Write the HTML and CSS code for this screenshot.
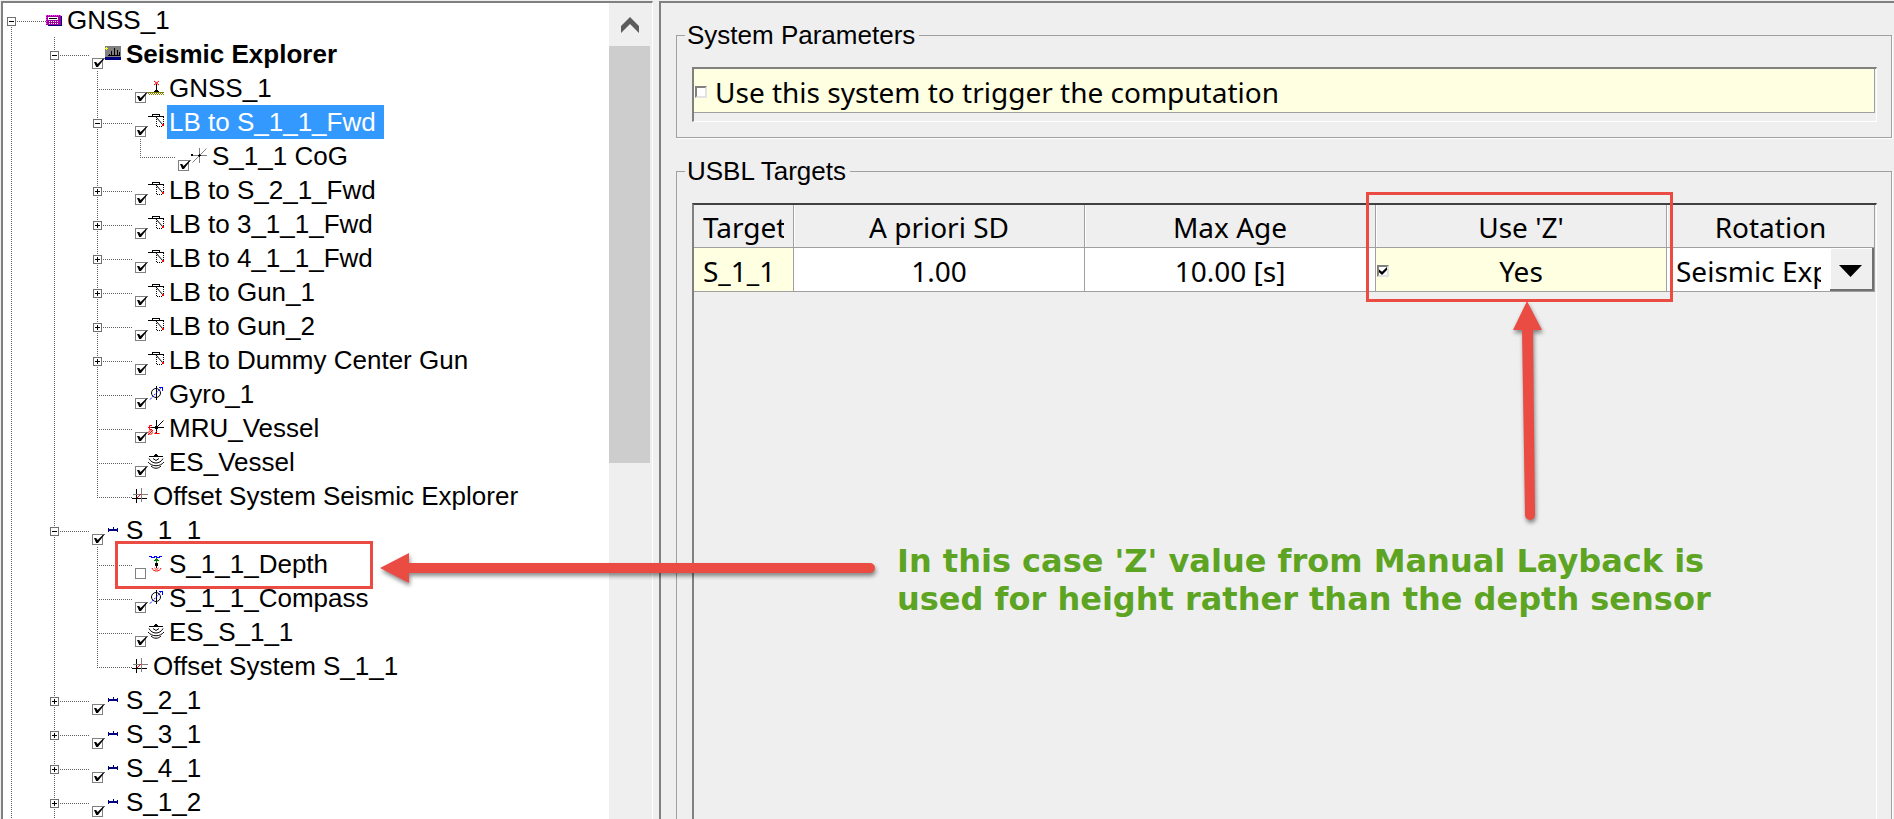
FILE: index.html
```html
<!DOCTYPE html>
<html lang="en">
<head>
<meta charset="utf-8">
<title>System configuration</title>
<link rel="stylesheet" href="styles.css">
</head>
<body>
<svg class="sprites" aria-hidden="true">
  <symbol id="i-root" viewBox="0 0 16 16"><path fill="#000080" d="M1 4h15v10H2z"/><path fill="#a000a0" d="M0 3h15v10H0z"/><path fill="none" stroke="#ff40ff" stroke-dasharray="1 1" d="M0 3.500h15M.5 3v10"/><path fill="#fff" d="M2 5h10v3H2z"/><path fill="#000" d="M3 6h8v1H3z"/><path stroke="#fff" stroke-dasharray="1 1" d="M3 9.500h10M3 11.500h10"/></symbol>
  <symbol id="i-ship" viewBox="0 0 16 16"><path fill="#808080" d="M0 0h16v14H0z"/><path fill="#ff0" d="M1 1h1v3H1zM0 2h3v1H0z"/><path fill="#000" d="M9 2h1v8H9zM6 5h1v5H6zM12 4h1v6h-1zM14 6h1v4h-1zM4 8h1v2H4zM3 9h12v1H3z"/><path fill="#000080" d="M0 11h16v3H0z"/></symbol>
  <symbol id="i-gnss" viewBox="0 0 16 16"><path class="fine" stroke="#f00" fill="none" d="M6 1l5 4M11 1L6 5"/><path fill="#000" d="M8 4h1v8H8zM7 10h3v1H7zM6 11h5v1H6z"/><path fill="#808000" d="M0 12h16v1H0z"/><path stroke="#808000" stroke-dasharray="1 1" d="M0 13.500h16M1 14.500h15"/></symbol>
  <symbol id="i-lb" viewBox="0 0 16 16"><path fill="#000" d="M4 0h8v1H4zM4 1h1v1H4zM11 1h1v1h-1zM0 2h16v1H0z"/><path class="fine" stroke="#000" fill="none" d="M8 3l7 8"/><path stroke="#000" stroke-dasharray="1 1" fill="none" d="M15.500 3v8M8.500 5v7M9 12.500h6"/><path fill="#f00" d="M14 10h2v2h-2z"/></symbol>
  <symbol id="i-cog" viewBox="0 0 16 16"><path stroke="#808080" fill="none" d="M8.500 0v15M0 7.500h16"/><path class="fine" stroke="#808080" fill="none" d="M15.500.5l-14 14"/><path fill="#000" d="M0 6h2v2H0zM7 7h3v1H7zM8 6h1v3H8z"/></symbol>
  <symbol id="i-gyro" viewBox="0 0 16 16"><circle class="fine" cx="8" cy="7" r="4.500" fill="none" stroke="#000"/><path fill="#000" d="M8 0h1v14H8z"/><path class="fine" stroke="#00f" stroke-dasharray="2 1" fill="none" d="M2 13.500L13 2"/><path fill="#00f" d="M11 1h4v4h-1V2h-3z"/></symbol>
  <symbol id="i-mru" viewBox="0 0 16 16"><path fill="#000" d="M8 0h1v14H8zM3 7h13v1H3zM7 6h3v3H7z"/><g class="fine" fill="none"><path stroke="#000" d="M15.500.5l-7 7"/><path stroke="#f00" d="M4 5.500H1.500v4H4M0 7.500h3"/><circle stroke="#f00" cx="2.500" cy="12.500" r="1.800"/><path stroke="#f00" d="M0 15l5-5M6.500 13.500h5M9 11l-2 2.500"/></g></symbol>
  <symbol id="i-echo" viewBox="0 0 16 16"><path fill="#000" d="M7 0h2v1H7zM6 1h4v1H6zM1 2h14v1H1z"/><path class="fine" stroke="#000" fill="none" d="M5 4.500l3 2 3-2M1 4.500c3 6 11 6 14 0M0 8c4 5 12 5 16 0M3 12c3 3 7 3 10 0"/></symbol>
  <symbol id="i-offset" viewBox="0 0 16 16"><path stroke="#000" fill="none" d="M4.500 1v14M0 10.500h15"/><path stroke="#808080" fill="none" d="M9.500 0v14M1 6.500h15"/><path class="fine" stroke="#f00" fill="none" d="M5 10l4-4"/></symbol>
  <symbol id="i-tow" viewBox="0 0 16 16"><path fill="#000080" d="M3 6h1v1h4V5h1v2h3V6h1v4h-1V9H4v1H3V9z"/></symbol>
  <symbol id="i-depth" viewBox="0 0 16 16"><path stroke="#00f" fill="none" d="M1 .5h3M6 .5h3M11 .5h3M3 1.500h4M8 1.500h4"/><path fill="#008000" d="M8 2h1v6H8zM7 3h3v1H7zM6 4h5v1H6z"/><path fill="#000" d="M7 7h3v3H7zM8 10h1v2H8z"/><path class="fine" stroke="#f00" fill="none" d="M4 12c1 4 8 4 9 0M6.500 12c1 1.500 3 1.500 4 0"/></symbol>
</svg>

<main class="app">
  <section class="tree-pane">
    <ul class="tree">
      <li class="row"><i class="g down"><button class="tg" aria-label="Collapse"></button></i><span class="node"><svg class="ic"><use href="#i-root"/></svg><span class="lb">GNSS_1</span></span></li>
      <li class="row"><i class="g v"></i><i class="g v"><button class="tg" aria-label="Collapse"></button></i><label class="node"><input type="checkbox" class="ck" checked><svg class="ic"><use href="#i-ship"/></svg><span class="lb strong">Seismic Explorer</span></label></li>
      <li class="row"><i class="g v"></i><i class="g v"></i><i class="g v h"></i><label class="node"><input type="checkbox" class="ck" checked><svg class="ic"><use href="#i-gnss"/></svg><span class="lb">GNSS_1</span></label></li>
      <li class="row"><i class="g v"></i><i class="g v"></i><i class="g v"><button class="tg" aria-label="Collapse"></button></i><label class="node"><input type="checkbox" class="ck" checked><svg class="ic"><use href="#i-lb"/></svg><span class="lb selected">LB to S_1_1_Fwd</span></label></li>
      <li class="row"><i class="g v"></i><i class="g v"></i><i class="g v"></i><i class="g end h"></i><label class="node"><input type="checkbox" class="ck" checked><svg class="ic"><use href="#i-cog"/></svg><span class="lb">S_1_1 CoG</span></label></li>
      <li class="row"><i class="g v"></i><i class="g v"></i><i class="g v"><button class="tg plus" aria-label="Expand"></button></i><label class="node"><input type="checkbox" class="ck" checked><svg class="ic"><use href="#i-lb"/></svg><span class="lb">LB to S_2_1_Fwd</span></label></li>
      <li class="row"><i class="g v"></i><i class="g v"></i><i class="g v"><button class="tg plus" aria-label="Expand"></button></i><label class="node"><input type="checkbox" class="ck" checked><svg class="ic"><use href="#i-lb"/></svg><span class="lb">LB to 3_1_1_Fwd</span></label></li>
      <li class="row"><i class="g v"></i><i class="g v"></i><i class="g v"><button class="tg plus" aria-label="Expand"></button></i><label class="node"><input type="checkbox" class="ck" checked><svg class="ic"><use href="#i-lb"/></svg><span class="lb">LB to 4_1_1_Fwd</span></label></li>
      <li class="row"><i class="g v"></i><i class="g v"></i><i class="g v"><button class="tg plus" aria-label="Expand"></button></i><label class="node"><input type="checkbox" class="ck" checked><svg class="ic"><use href="#i-lb"/></svg><span class="lb">LB to Gun_1</span></label></li>
      <li class="row"><i class="g v"></i><i class="g v"></i><i class="g v"><button class="tg plus" aria-label="Expand"></button></i><label class="node"><input type="checkbox" class="ck" checked><svg class="ic"><use href="#i-lb"/></svg><span class="lb">LB to Gun_2</span></label></li>
      <li class="row"><i class="g v"></i><i class="g v"></i><i class="g v"><button class="tg plus" aria-label="Expand"></button></i><label class="node"><input type="checkbox" class="ck" checked><svg class="ic"><use href="#i-lb"/></svg><span class="lb">LB to Dummy Center Gun</span></label></li>
      <li class="row"><i class="g v"></i><i class="g v"></i><i class="g v h"></i><label class="node"><input type="checkbox" class="ck" checked><svg class="ic"><use href="#i-gyro"/></svg><span class="lb">Gyro_1</span></label></li>
      <li class="row"><i class="g v"></i><i class="g v"></i><i class="g v h"></i><label class="node"><input type="checkbox" class="ck" checked><svg class="ic"><use href="#i-mru"/></svg><span class="lb">MRU_Vessel</span></label></li>
      <li class="row"><i class="g v"></i><i class="g v"></i><i class="g v h"></i><label class="node"><input type="checkbox" class="ck" checked><svg class="ic"><use href="#i-echo"/></svg><span class="lb">ES_Vessel</span></label></li>
      <li class="row"><i class="g v"></i><i class="g v"></i><i class="g end h"></i><span class="node"><svg class="ic"><use href="#i-offset"/></svg><span class="lb">Offset System Seismic Explorer</span></span></li>
      <li class="row"><i class="g v"></i><i class="g v"><button class="tg" aria-label="Collapse"></button></i><label class="node"><input type="checkbox" class="ck" checked><svg class="ic"><use href="#i-tow"/></svg><span class="lb">S_1_1</span></label></li>
      <li class="row"><i class="g v"></i><i class="g v"></i><i class="g v h"></i><label class="node"><input type="checkbox" class="ck"><svg class="ic"><use href="#i-depth"/></svg><span class="lb">S_1_1_Depth</span></label></li>
      <li class="row"><i class="g v"></i><i class="g v"></i><i class="g v h"></i><label class="node"><input type="checkbox" class="ck" checked><svg class="ic"><use href="#i-gyro"/></svg><span class="lb">S_1_1_Compass</span></label></li>
      <li class="row"><i class="g v"></i><i class="g v"></i><i class="g v h"></i><label class="node"><input type="checkbox" class="ck" checked><svg class="ic"><use href="#i-echo"/></svg><span class="lb">ES_S_1_1</span></label></li>
      <li class="row"><i class="g v"></i><i class="g v"></i><i class="g end h"></i><span class="node"><svg class="ic"><use href="#i-offset"/></svg><span class="lb">Offset System S_1_1</span></span></li>
      <li class="row"><i class="g v"></i><i class="g v"><button class="tg plus" aria-label="Expand"></button></i><label class="node"><input type="checkbox" class="ck" checked><svg class="ic"><use href="#i-tow"/></svg><span class="lb">S_2_1</span></label></li>
      <li class="row"><i class="g v"></i><i class="g v"><button class="tg plus" aria-label="Expand"></button></i><label class="node"><input type="checkbox" class="ck" checked><svg class="ic"><use href="#i-tow"/></svg><span class="lb">S_3_1</span></label></li>
      <li class="row"><i class="g v"></i><i class="g v"><button class="tg plus" aria-label="Expand"></button></i><label class="node"><input type="checkbox" class="ck" checked><svg class="ic"><use href="#i-tow"/></svg><span class="lb">S_4_1</span></label></li>
      <li class="row"><i class="g v"></i><i class="g v"><button class="tg plus" aria-label="Expand"></button></i><label class="node"><input type="checkbox" class="ck" checked><svg class="ic"><use href="#i-tow"/></svg><span class="lb">S_1_2</span></label></li>
    </ul>
    <div class="scroll">
      <button class="scroll-up" aria-label="Scroll up"><svg width="18" height="16" viewBox="0 0 18 16"><path fill="#5c5c5c" d="M0 9l9-9 9 9v7L9 7l-9 9z"/></svg></button>
      <div class="scroll-track"><div class="thumb"></div></div>
    </div>
  </section>

  <section class="detail">
    <fieldset class="group">
      <legend>System Parameters</legend>
      <div class="sunken params">
        <label class="param"><input type="checkbox" class="box">Use this system to trigger the computation</label>
      </div>
    </fieldset>
    <fieldset class="group fill">
      <legend>USBL Targets</legend>
      <div class="sunken grid">
        <table>
          <colgroup><col class="c-target"><col><col><col><col class="c-rotation"></colgroup>
          <thead><tr><th class="left">Target</th><th>A priori SD</th><th>Max Age</th><th>Use 'Z'</th><th>Rotation</th></tr></thead>
          <tbody><tr>
            <td class="left key">S_1_1</td><td>1.00</td><td>10.00 [s]</td>
            <td class="key"><label class="usez"><input type="checkbox" class="box" checked><span>Yes</span></label></td>
            <td class="choice"><select aria-label="Rotation"><option>Seismic Explorer</option></select></td>
          </tr></tbody>
        </table>
      </div>
    </fieldset>
  </section>

  <svg class="marks" aria-hidden="true">
    <g fill="none" stroke="#ea4c44" stroke-width="3">
      <path d="M116.500 542.500h255v45h-255z"/>
      <path d="M1367.500 193.500h304v107h-304z"/>
    </g>
    <g class="arrows" fill="#ea4c44">
      <path d="M380 568l29-15v10h461a5 5 0 0 1 0 10H409v10z"/>
      <path d="M1527 301l15 29h-9l2 185a5 5 0 0 1-10 0l-3-185h-9z"/>
    </g>
  </svg>
  <p class="callout">In this case 'Z' value from Manual Layback is<br>used for height rather than the depth sensor</p>
</main>
</body>
</html>
```
FILE: styles.css
```css
* { box-sizing: border-box; }

body {
  margin: 0;
  background: #efefef;
  color: #000;
  font: 26px/34px "Liberation Sans", Arial, sans-serif;
}

.sprites { display: none; }
.fine { shape-rendering: auto; }

.app {
  position: relative;
  display: grid;
  grid-template-columns: 659fr 1235fr;
  min-height: 100vh;
}

/* Tree */
.tree-pane {
  display: flex;
  margin: 1px 6px 0 1px;
  border: 2px solid #808080;
  border-right: 1px solid #fff;
  border-bottom: 0;
  background: #efefef;
}

.tree {
  flex: 1;
  min-width: 0;
  margin: 0;
  padding: 0;
  list-style: none;
  background: #fff;
  overflow: hidden;
}

.row { display: flex; height: 34px; white-space: nowrap; }

.g {
  position: relative;
  flex: none;
  width: 43px;
  height: 34px;
}

.v::before, .end::before, .down::before {
  content: "";
  position: absolute;
  left: 8px;
  top: 0;
  width: 1px;
  height: 34px;
  background: repeating-linear-gradient(#606060 0 1px, transparent 1px 2px);
}

.end::before { height: 18px; }
.down::before { top: 18px; height: 16px; }

.h::after, .g:has(.tg)::after {
  content: "";
  position: absolute;
  left: 8px;
  right: 0;
  top: 18px;
  height: 1px;
  background: repeating-linear-gradient(90deg, #606060 0 1px, transparent 1px 2px);
}

.tg {
  position: absolute;
  z-index: 1;
  left: 4px;
  top: 14px;
  width: 9px;
  height: 9px;
  padding: 0;
  border: 1px solid #707070;
  background: linear-gradient(#000, #000) center / 5px 1px no-repeat #fff;
}

.tg.plus {
  background:
    linear-gradient(#000, #000) center / 5px 1px no-repeat,
    linear-gradient(#000, #000) center / 1px 5px no-repeat,
    #fff;
}

.node { display: flex; align-items: flex-start; }

.ck {
  appearance: none;
  position: relative;
  width: 11px;
  height: 11px;
  margin: 21px 2px 0 3px;
  border: 1px solid #808080;
  background: #fff;
}

.ck:checked::after {
  content: "";
  position: absolute;
  left: 1px;
  top: -1px;
  width: 11px;
  height: 9px;
  background: #000;
  clip-path: polygon(0 44%, 20% 44%, 32% 66%, 90% 0, 100% 0, 36% 100%, 20% 100%);
}

.ic {
  flex: none;
  width: 16px;
  height: 16px;
  margin-top: 9px;
  shape-rendering: crispEdges;
}

.lb { margin-left: 3px; padding: 0 8px 0 2px; }
.strong { font-weight: bold; }
.selected { background: #39f; color: #fff; }

.scroll { display: flex; flex-direction: column; width: 43px; padding-right: 2px; }

.scroll-up {
  display: grid;
  place-items: center;
  height: 43px;
  padding: 0;
  border: 0;
  background: #efefef;
}

.scroll-track { flex: 1; }
.thumb { height: 54%; background: #cdcdcd; }

/* Detail pane */
.detail {
  display: flex;
  flex-direction: column;
  gap: 15px;
  min-width: 0;
  margin-top: 1px;
  padding: 14px 2px 0 15px;
  border: solid #808080;
  border-width: 2px 0 0 2px;
}

.group {
  min-width: 0;
  margin: 0;
  padding: 14px 14px 15px 15px;
  border: 1px solid #a0a0a0;
  box-shadow: 1px 1px #fff;
}

.group legend { padding: 0 4px 0 2px; margin-left: -7px; line-height: 36px; }

.fill { flex: 1; padding-bottom: 0; border-bottom: 0; }

.sunken {
  border: 2px solid #808080;
  border-right: 1px solid #fff;
  border-bottom: 1px solid #fff;
  padding-right: 1px;
  font: 28px/40px "Noto Sans", "Open Sans", sans-serif;
}

.params { padding-bottom: 8px; }

.param {
  display: flex;
  align-items: center;
  gap: 8px;
  padding: 3px 0 0 1px;
  border: solid #a0a0a0;
  border-width: 0 1px 1px 0;
  background: #ffffe1;
}

.box {
  appearance: none;
  flex: none;
  width: 12px;
  height: 12px;
  margin: 0;
  border: 2px solid;
  border-color: #808080 #e3e3e3 #e3e3e3 #808080;
  background: #fff;
}

.box:checked::after {
  content: "";
  display: block;
  width: 8px;
  height: 8px;
  background: #000;
  clip-path: polygon(0 30%, 38% 58%, 100% 0, 100% 36%, 38% 100%, 0 66%);
}

.grid { height: 100%; border-top-color: #404040; border-bottom: 0; }

table {
  width: 100%;
  table-layout: fixed;
  border-spacing: 0;
}

.c-target { width: 100px; }
.c-rotation { width: 208px; }

th, td {
  padding: 2px 0 0;
  border: solid #a0a0a0;
  border-width: 0 1px 1px 0;
  font-weight: normal;
  text-align: center;
  white-space: nowrap;
  overflow: hidden;
}

th { height: 43px; box-shadow: inset 1px 0 #fff; }
td { height: 44px; padding-top: 3px; background: #fff; }
.left { padding-left: 9px; padding-right: 9px; text-align: left; }
th.left { box-shadow: none; overflow: clip; overflow-clip-margin: content-box; }
td.key { background: #ffffe1; }
td.choice { padding: 0; }

.usez { display: flex; align-items: center; padding-left: 1px; }
.usez span { flex: 1; padding-right: 13px; }

select {
  appearance: none;
  display: block;
  width: 100%;
  height: 43px;
  margin: 0;
  padding: 3px 53px 0 9px;
  border: 0;
  border-radius: 0;
  background: #fff url("data:image/svg+xml,%3Csvg xmlns='http://www.w3.org/2000/svg' width='44' height='43'%3E%3Cpath fill='%23efefef' d='M0 0h44v43H0z'/%3E%3Cpath fill='%23fff' d='M0 0h43v1H1v41H0z'/%3E%3Cpath fill='%23707070' d='M0 43v-2h42V0h2v43z'/%3E%3Cpath d='M9 17h23L20.500 29z'/%3E%3C/svg%3E") right top no-repeat;
  color: #000;
  font: inherit;
}

/* Annotations laid over the panes */
.marks {
  position: absolute;
  inset: 0;
  width: 100%;
  height: 100%;
  pointer-events: none;
}

.arrows { filter: drop-shadow(1px 3px 2px rgb(0 0 0 / 45%)); }

.callout {
  position: absolute;
  left: 897px;
  top: 542px;
  margin: 0;
  color: #5da423;
  font: bold 32px/38px "DejaVu Sans", Verdana, sans-serif;
  white-space: nowrap;
}
```
